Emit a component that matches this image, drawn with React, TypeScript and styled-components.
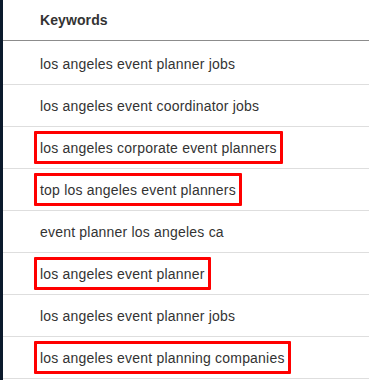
import React from "react";
import styled, { createGlobalStyle } from "styled-components";

const Global = createGlobalStyle`
  html, body { margin: 0; padding: 0; background: #ffffff; }
  body { font-family: Arial, "Liberation Sans", Helvetica, sans-serif; }
`;

const Page = styled.div`
  display: flex;
  width: 369px;
  height: 380px;
  overflow: hidden;
  background: #ffffff;
`;

const Strip = styled.div`
  width: 3px;
  flex: 0 0 3px;
  background: #0b1a2c;
`;

const Table = styled.div`
  flex: 1;
  display: flex;
  flex-direction: column;
`;

const Header = styled.div`
  height: 40px;
  display: flex;
  align-items: center;
  padding-left: 37px;
  border-bottom: 1px solid #8c8c8c;
  font-weight: 700;
  font-size: 14px;
  color: #333333;
  letter-spacing: 0.1px;
`;

const Body = styled.div`
  display: flex;
  flex-direction: column;
  padding-top: 2px;
`;

const Row = styled.div`
  height: 41px;
  display: flex;
  align-items: center;
  padding-left: 31px;
  border-bottom: 1px solid #dedede;
  box-sizing: content-box;
`;

const Label = styled.span<{ $marked: boolean }>`
  display: inline-block;
  font-size: 14px;
  line-height: 16px;
  letter-spacing: 0.2px;
  color: #333333;
  padding: 6px 3px 5px 3px;
  border: 3px solid ${(p) => (p.$marked ? "#ff0000" : "transparent")};
  border-radius: 1px;
`;

const rows: { text: string; marked: boolean }[] = [
  { text: "los angeles event planner jobs", marked: false },
  { text: "los angeles event coordinator jobs", marked: false },
  { text: "los angeles corporate event planners", marked: true },
  { text: "top los angeles event planners", marked: true },
  { text: "event planner los angeles ca", marked: false },
  { text: "los angeles event planner", marked: true },
  { text: "los angeles event planner jobs", marked: false },
  { text: "los angeles event planning companies", marked: true },
];

export default function App() {
  return (
    <>
      <Global />
      <Page>
        <Strip />
        <Table>
          <Header>Keywords</Header>
          <Body>
            {rows.map((r, i) => (
              <Row key={i}>
                <Label $marked={r.marked}>{r.text}</Label>
              </Row>
            ))}
          </Body>
        </Table>
      </Page>
    </>
  );
}
